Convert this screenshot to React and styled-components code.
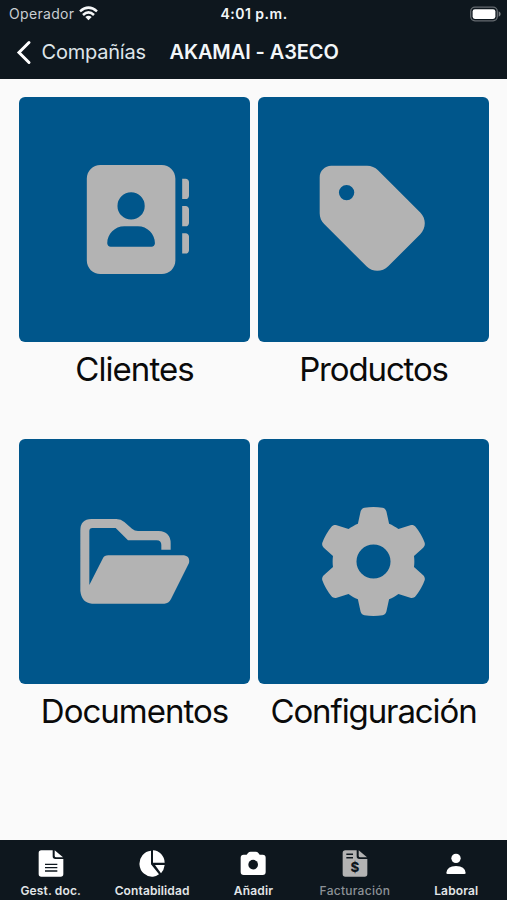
import React from "react";
import styled, { createGlobalStyle } from "styled-components";
import { FaTag, FaGear } from "react-icons/fa6";

const GlobalStyle = createGlobalStyle`
  * { box-sizing: border-box; }
  body { margin: 0; font-family: Inter, "Liberation Sans", sans-serif; }
`;

const Screen = styled.div`
  width: 507px;
  height: 900px;
  display: flex;
  flex-direction: column;
  background: #fafafa;
  overflow: hidden;
`;

const Header = styled.header`
  height: 79px;
  flex: none;
  background: #0e171e;
  color: #f3f6f8;
`;

const StatusBar = styled.div`
  height: 27px;
  display: grid;
  grid-template-columns: 1fr auto 1fr;
  align-items: center;
  padding: 0 6px 0 9px;
`;

const Carrier = styled.div`
  display: flex;
  align-items: center;
  gap: 5px;
  font-size: 14px;
  letter-spacing: 0.32px;
  color: #c9ced2;
`;

const Clock = styled.div`
  font-size: 14px;
  font-weight: 600;
  letter-spacing: 0.5px;
  margin-right: 2px;
`;

const BatterySlot = styled.div`
  display: flex;
  justify-content: flex-end;
`;

const NavBar = styled.nav`
  height: 50px;
  display: flex;
  align-items: center;
  padding-left: 16px;
`;

const BackLink = styled.div`
  width: 153.5px;
  display: flex;
  align-items: center;
  gap: 9.500px;
  font-size: 20px;
  letter-spacing: -0.22px;
  color: #dfe5ea;
`;

const Title = styled.h1`
  margin: 0;
  font-size: 20px;
  font-weight: 600;
  letter-spacing: -0.1px;
  white-space: nowrap;
`;

const Menu = styled.main`
  flex: 1;
  display: grid;
  grid-template-columns: 231px 231px;
  grid-auto-rows: 342px;
  column-gap: 8px;
  padding: 18px 0 0 19px;
  overflow: hidden;
`;

const MenuItem = styled.section`
  display: flex;
  flex-direction: column;
  align-items: center;
`;

const Tile = styled.div`
  width: 231px;
  height: 245px;
  border-radius: 6px;
  background: #00568b;
  color: #b3b3b3;
  display: flex;
  align-items: center;
  justify-content: center;
  svg { display: block; }
`;

const TileLabel = styled.div`
  margin-top: 7px;
  font-size: 33px;
  line-height: 40px;
  letter-spacing: ${(p) => p.$spacing};
  white-space: nowrap;
  color: #0a0a0a;
`;

const TabBar = styled.footer`
  height: 60px;
  flex: none;
  display: grid;
  grid-template-columns: repeat(5, 1fr);
  background: #0e171e;
`;

const Tab = styled.div`
  display: flex;
  flex-direction: column;
  align-items: center;
  padding-top: 9.500px;
  color: ${(p) => (p.$active ? "#b3b3b3" : "#ffffff")};
  svg { display: block; }
`;

const TabLabel = styled.span`
  margin-top: 6.500px;
  font-size: 12px;
  line-height: 15px;
  font-weight: ${(p) => (p.$active ? 500 : 600)};
  letter-spacing: ${(p) => p.$spacing};
  white-space: nowrap;
  color: ${(p) => (p.$active ? "#8c9297" : "#e2e6e8")};
`;

const WifiIcon = () => (
  <svg width="19" height="15" viewBox="0 0 57 45" fill="none" stroke="#f5f7f8" strokeWidth="7.500">
    <path d="M3 16Q28.500-6 54 16" />
    <path d="M12 27Q28.500 11 45 27" />
    <path d="M19 33Q28.500 25 38 33L28.500 43Z" fill="#f5f7f8" stroke="none" />
  </svg>
);

const BatteryIcon = () => (
  <svg width="31" height="16" viewBox="0 0 31 16">
    <rect x="0.700" y="1.200" width="26.600" height="13.600" rx="4.200" fill="none" stroke="#656b70" strokeWidth="1.300" />
    <rect x="2.600" y="3.200" width="22.800" height="9.700" rx="2.300" fill="#fff" />
    <path d="M28.700 5.300Q30.700 6.300 30.700 8T28.700 10.700Z" fill="#7c8185" />
  </svg>
);

const BackIcon = () => (
  <svg width="16" height="25" viewBox="0 0 16 25" fill="none" stroke="#fff" strokeWidth="3" strokeLinecap="round">
    <path d="M13 2.500L3 12.500L13 22.500" />
  </svg>
);

const ContactsIcon = () => (
  <svg width="109" height="109" viewBox="0 0 512 512" fill="currentColor">
    <path d="M96 0C60.7 0 32 28.700 32 64V448C32 483.300 60.700 512 96 512H384C419.300 512 448 483.300 448 448V64C448 28.700 419.300 0 384 0ZM208 288H272C316.200 288 352 323.800 352 368C352 376.800 344.800 384 336 384H144C135.200 384 128 376.800 128 368C128 323.800 163.800 288 208 288ZM176 192A64 64 0 1 1 304 192A64 64 0 1 1 176 192Z" />
    <path d="M480 64V160H496C504.800 160 512 152.800 512 144V80C512 71.200 504.800 64 496 64ZM480 192V288H496C504.800 288 512 280.800 512 272V208C512 199.200 504.800 192 496 192ZM480 320V416H496C504.800 416 512 408.800 512 400V336C512 327.200 504.800 320 496 320Z" />
  </svg>
);

const FolderIcon = () => (
  <svg width="110" height="85" viewBox="61 88 330 255" fill="currentColor">
    <path d="M62 304V123Q62 88 95 88H170Q184 88 194 97L217 117Q225 124 235 124H297Q333 126 333 161V180H305V166Q305 152 291 152H205L168 115H98Q89 115 89 124V286L129 207Q134 197 146 197H373Q392 200 388 220L334 328Q327 342 314 342H97Q66 340 62 304Z" />
  </svg>
);

const DocumentIcon = () => (
  <svg width="26" height="27" viewBox="0 0 78 81">
    <path d="M10 1H44V19Q44 27 52 27H76V72Q76 80 68 80H10Q2 80 2 72V9Q2 1 10 1Z" fill="currentColor" />
    <path d="M50 1L75 22H55Q50 22 50 17Z" fill="currentColor" />
    <path d="M21 43H58M21 53H58M21 63H58" stroke="#0e171e" strokeWidth="4" />
  </svg>
);

const PieIcon = () => (
  <svg width="26" height="27" viewBox="0 0 78 81" fill="currentColor">
    <path d="M36 2V43L60 73Q51 80 42 80A37 38.500 0 0 1 36 2Z" />
    <path d="M42 1A36 38 0 0 1 77 38H42Z" />
    <path d="M48 45H77Q75 60 66 70Z" />
  </svg>
);

const CameraIcon = () => (
  <svg width="26" height="27" viewBox="0 0 78 81">
    <path d="M11 14H20L24 9Q27 5 32 5H47Q52 5 55 9L59 14H68Q77 14 77 23V66Q77 75 68 75H11Q2 75 2 66V23Q2 14 11 14Z" fill="currentColor" />
    <circle cx="39.500" cy="44" r="14.500" fill="#0e171e" />
  </svg>
);

const Dollar = styled.text`
  font-family: Inter, "Liberation Sans", sans-serif;
  font-size: 40px;
  font-weight: 800;
  text-anchor: middle;
  fill: #0e171e;
`;

const InvoiceIcon = () => (
  <svg width="26" height="27" viewBox="0 0 78 81">
    <path d="M10 1H44V19Q44 27 52 27H76V72Q76 80 68 80H10Q2 80 2 72V9Q2 1 10 1Z" fill="currentColor" />
    <path d="M50 1L75 22H55Q50 22 50 17Z" fill="currentColor" />
    <path d="M13 13H33M13 23H33" stroke="#0e171e" strokeWidth="4.500" />
    <Dollar x="39" y="67">$</Dollar>
  </svg>
);

const PersonIcon = () => (
  <svg width="26" height="27" viewBox="0 0 78 81" fill="currentColor">
    <circle cx="39" cy="25" r="14" />
    <path d="M10 69Q12 48 39 48T68 69Q68 72 64 72H14Q10 72 10 69Z" />
  </svg>
);

const menu = [
  { label: "Clientes", icon: <ContactsIcon />, spacing: "-0.95px" },
  { label: "Productos", icon: <FaTag size={123} />, spacing: "-1.15px" },
  { label: "Documentos", icon: <FolderIcon />, spacing: "-1px" },
  { label: "Configuración", icon: <FaGear size={109} />, spacing: "-1.1px" },
];

const tabs = [
  { label: "Gest. doc.", icon: <DocumentIcon />, spacing: "0.15px" },
  { label: "Contabilidad", icon: <PieIcon />, spacing: "0.12px" },
  { label: "Añadir", icon: <CameraIcon />, spacing: "0.15px" },
  { label: "Facturación", icon: <InvoiceIcon />, spacing: "0.27px", active: true },
  { label: "Laboral", icon: <PersonIcon />, spacing: "0.15px" },
];

export default function App() {
  return (
    <Screen>
      <GlobalStyle />
      <Header>
        <StatusBar>
          <Carrier>Operador <WifiIcon /></Carrier>
          <Clock>4:01 p.m.</Clock>
          <BatterySlot><BatteryIcon /></BatterySlot>
        </StatusBar>
        <NavBar>
          <BackLink><BackIcon />Compañías</BackLink>
          <Title>AKAMAI - A3ECO</Title>
        </NavBar>
      </Header>
      <Menu>
        {menu.map((m) => (
          <MenuItem key={m.label}>
            <Tile>{m.icon}</Tile>
            <TileLabel $spacing={m.spacing}>{m.label}</TileLabel>
          </MenuItem>
        ))}
      </Menu>
      <TabBar>
        {tabs.map((t) => (
          <Tab key={t.label} $active={t.active}>
            {t.icon}
            <TabLabel $active={t.active} $spacing={t.spacing}>{t.label}</TabLabel>
          </Tab>
        ))}
      </TabBar>
    </Screen>
  );
}
